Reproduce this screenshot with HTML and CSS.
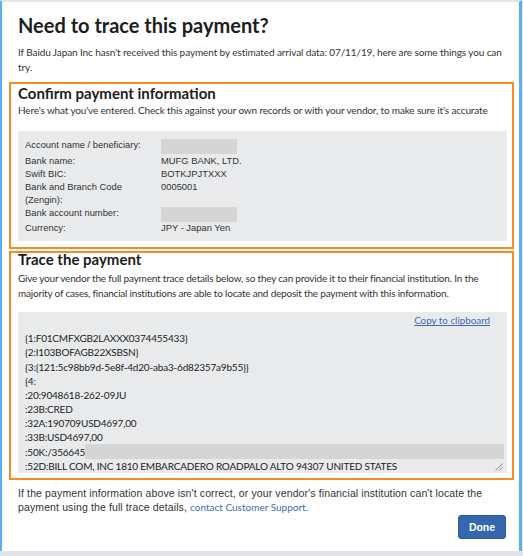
FILE: index.html
```html
<!DOCTYPE html>
<html lang="en">
<head>
  <meta charset="UTF-8">
  <meta name="viewport" content="width=device-width, initial-scale=1.0">
  <title>Need to trace this payment?</title>
  <link rel="stylesheet" href="styles.css">
</head>
<body>
  <div class="modal">
    <h1 class="modal-title">Need to trace this payment?</h1>
    <p class="intro">If Baidu Japan Inc hasn't received this payment by estimated arrival data: 07/11/19, here are some things you can try.</p>

    <!-- confirm payment info -->
    <section class="step step-confirm">
      <h2>Confirm payment information</h2>
      <p class="step-text">Here's what you've entered. Check this against your own records or with your vendor, to make sure it's accurate</p>
      <div class="info-box">
        <div class="info-row">
          <span class="label">Account name / beneficiary:</span>
          <span class="value"><span class="redacted"></span></span>
        </div>
        <div class="info-row">
          <span class="label">Bank name:</span>
          <span class="value">MUFG BANK, LTD.</span>
        </div>
        <div class="info-row">
          <span class="label">Swift BIC:</span>
          <span class="value">BOTKJPJTXXX</span>
        </div>
        <div class="info-row">
          <span class="label">Bank and Branch Code (Zengin):</span>
          <span class="value">0005001</span>
        </div>
        <div class="info-row">
          <span class="label">Bank account number:</span>
          <span class="value"><span class="redacted"></span></span>
        </div>
        <div class="info-row">
          <span class="label">Currency:</span>
          <span class="value">JPY - Japan Yen</span>
        </div>
      </div>
    </section>

    <!-- trace details -->
    <section class="step step-trace">
      <h2>Trace the payment</h2>
      <p class="step-text trace-text">Give your vendor the full payment trace details below, so they can provide it to their financial institution. In the majority of cases, financial institutions are able to locate and deposit the payment with this information.</p>
      <div class="trace-box">
        <div class="copy-row"><a href="#" class="copy-link">Copy to clipboard</a></div>
        <div class="trace-lines">
          <div>{1:F01CMFXGB2LAXXX0374455433}</div>
          <div>{2:I103BOFAGB22XSBSN}</div>
          <div>{3:{121:5c98bb9d-5e8f-4d20-aba3-6d82357a9b55}}</div>
          <div>{4:</div>
          <div>:20:9048618-262-09JU</div>
          <div>:23B:CRED</div>
          <div>:32A:190709USD4697,00</div>
          <div>:33B:USD4697,00</div>
          <div class="line-redacted">:50K:/356645<span class="redacted wide"></span></div>
          <div>:52D:BILL COM, INC 1810 EMBARCADERO ROADPALO ALTO 94307 UNITED STATES</div>
        </div>
        <svg class="grip" width="8" height="8" viewBox="0 0 8 8">
          <path d="M7.5 0.5 L0.5 7.5 M7.5 4 L4 7.5" stroke="#8c8c8c" stroke-width="1"/>
        </svg>
      </div>
    </section>

    <p class="footer-note">If the payment information above isn't correct, or your vendor's financial institution can't locate the payment using the full trace details, <a href="#">contact Customer Support.</a></p>

    <div class="actions">
      <button class="btn-done">Done</button>
    </div>
  </div>
</body>
</html>
```

FILE: styles.css
```css
* {
  margin: 0;
  padding: 0;
  box-sizing: border-box;
}
html, body {
  width: 100%;
  height: 100%;
  background-color: #e1e3e6;
  overflow: hidden;
}
.modal {
  width: 522px;
  height: 551px;
  background: #fff;
  border-top: 2px solid #e3e6ea;
  border-left: 2px solid #5caef7;
  border-right: 3px solid #5caef7;
  padding: 10px 5px 0 7px;
  font-family: Lato, "Liberation Sans", sans-serif;
  color: #333;
}
.modal-title {
  font-size: 20px;
  font-weight: 700;
  color: #1d1d1d;
  line-height: 26px;
  padding-left: 9px;
}
.intro {
  font-size: 10px;
  letter-spacing: -0.1px;
  line-height: 15px;
  padding: 7px 9px 0 9px;
}

/* orange outlined steps */
.step {
  border: 2px solid #f58d20;
  padding: 1px 5px 6px 7px;
}
.step-confirm {
  margin-top: 7px;
}
.step-trace {
  margin-top: 2px;
  padding-bottom: 5px;
}
.step h2 {
  font-size: 15px;
  font-weight: 700;
  color: #1d1d1d;
  line-height: 17px;
}
.step-trace h2 {
  margin-top: -3px;
}
.step-text {
  font-size: 10px;
  letter-spacing: -0.15px;
  line-height: 15px;
  margin-top: 1px;
}
.trace-text {
  letter-spacing: -0.2px;
  line-height: 14.5px;
  margin-top: 3px;
}

.info-box {
  background: #e9eaec;
  margin-top: 13px;
  padding: 8px 7px 6px 7px;
  font-family: "Liberation Sans", Arial, sans-serif;
  font-size: 9.4px;
  color: #333;
}
.info-row {
  display: grid;
  grid-template-columns: 136px 1fr;
  line-height: 12.9px;
}
.label {
  padding-right: 6px;
}
.redacted {
  display: inline-block;
  width: 76px;
  height: 15px;
  background: #d5d5d6;
  vertical-align: -3px;
}

/* trace text area */
.trace-box {
  position: relative;
  background: #e9eaec;
  margin-top: 12px;
  padding: 1px 0 0 7px;
  height: 161px;
}
.copy-row {
  display: flex;
  justify-content: flex-end;
  padding-right: 17px;
}
.copy-link {
  font-size: 9.8px;
  color: #3a6db5;
  line-height: 15px;
  text-decoration: underline;
}
.trace-lines {
  margin-top: 3px;
  font-size: 10px;
  letter-spacing: -0.2px;
  line-height: 14.1px;
  color: #222;
}
.line-redacted {
  display: flex;
  align-items: center;
}
.redacted.wide {
  width: 419px;
  height: 15px;
  background: #d5d5d6;
}
.grip {
  position: absolute;
  right: 4px;
  bottom: 2px;
}

.footer-note {
  font-family: "Liberation Sans", Arial, sans-serif;
  font-size: 10.5px;
  letter-spacing: 0.12px;
  line-height: 14px;
  padding: 6px 9px 0 9px;
}
.footer-note a {
  font-family: Lato, sans-serif;
  font-size: 10px;
  letter-spacing: 0;
  color: #3a6db5;
  text-decoration: none;
}
.actions {
  display: flex;
  justify-content: flex-end;
  padding-top: 1px;
  padding-right: 8px;
}
.btn-done {
  background: #3567ae;
  color: #fff;
  border: 1px solid #2f5d9e;
  border-radius: 3px;
  font-family: "Liberation Sans", Arial, sans-serif;
  font-weight: 700;
  font-size: 10.5px;
  width: 48px;
  height: 24px;
}
```
